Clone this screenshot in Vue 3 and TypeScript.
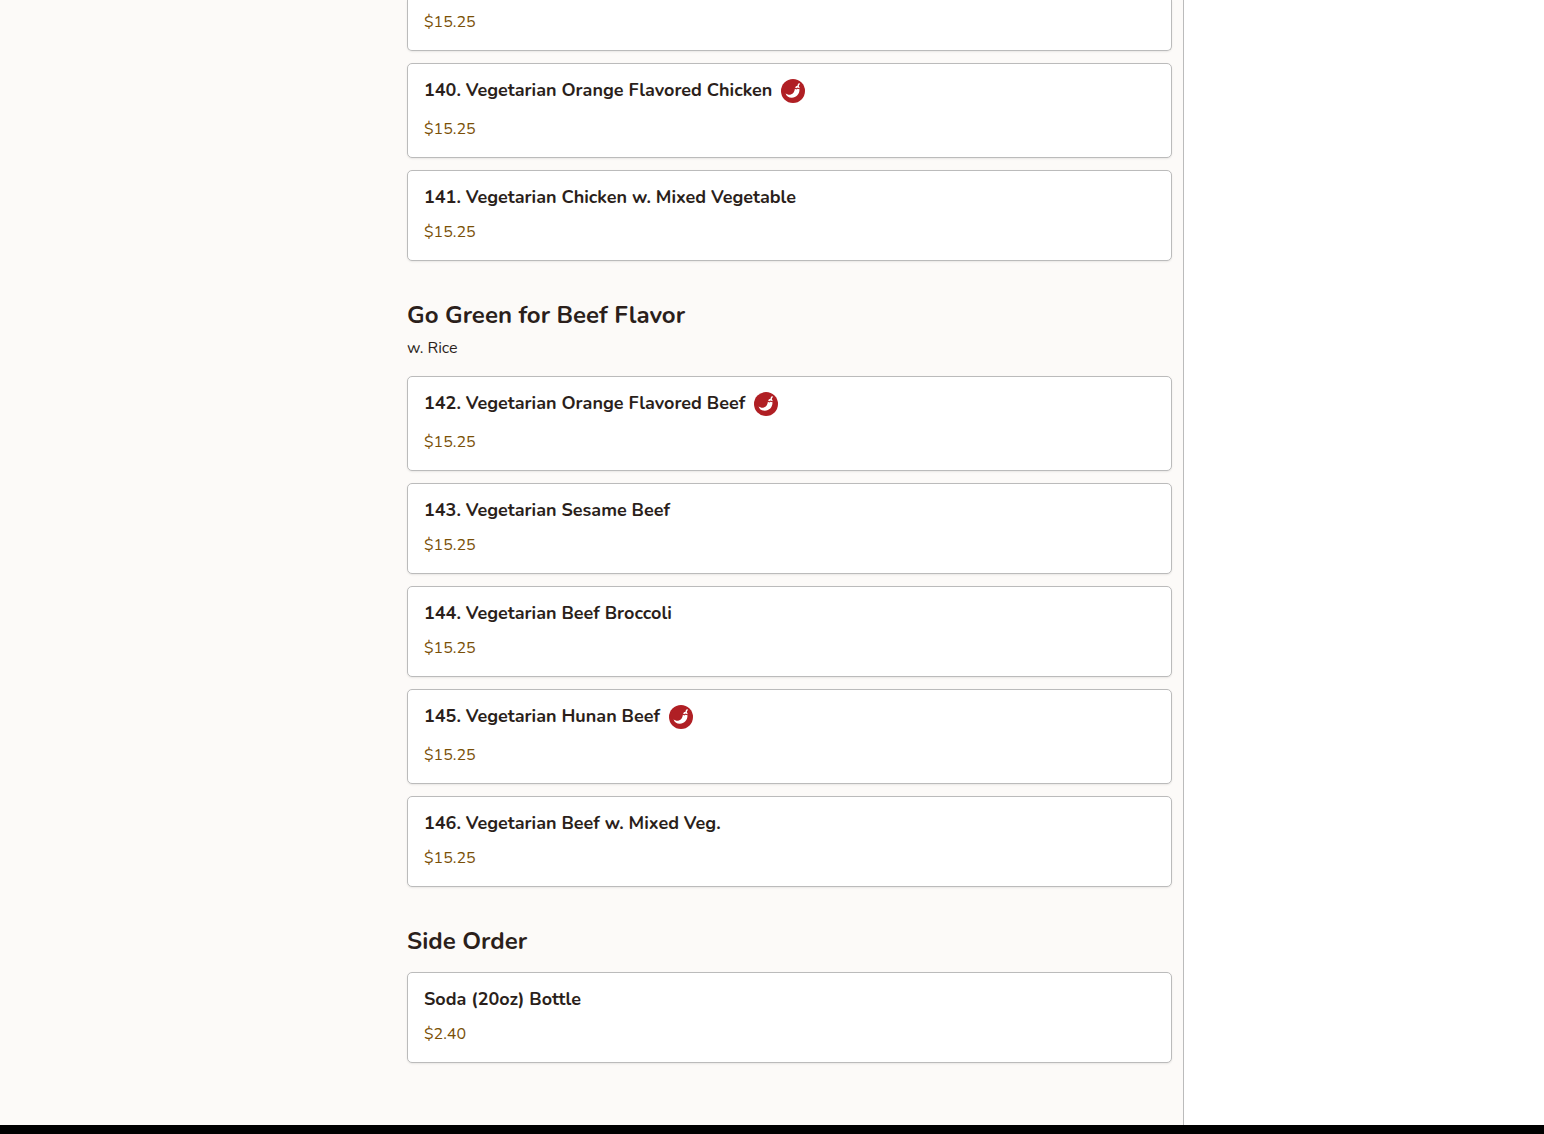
<script setup lang="ts">
interface MenuItem {
  id: string
  name: string
  price: string
  spicy?: boolean
}

interface MenuSection {
  id: string
  title?: string
  note?: string
  items: MenuItem[]
}

const sections: MenuSection[] = [
  {
    id: 'chicken',
    items: [
      { id: '139', name: '', price: '$15.25' },
      { id: '140', name: '140. Vegetarian Orange Flavored Chicken', price: '$15.25', spicy: true },
      { id: '141', name: '141. Vegetarian Chicken w. Mixed Vegetable', price: '$15.25' },
    ],
  },
  {
    id: 'beef',
    title: 'Go Green for Beef Flavor',
    note: 'w. Rice',
    items: [
      { id: '142', name: '142. Vegetarian Orange Flavored Beef', price: '$15.25', spicy: true },
      { id: '143', name: '143. Vegetarian Sesame Beef', price: '$15.25' },
      { id: '144', name: '144. Vegetarian Beef Broccoli', price: '$15.25' },
      { id: '145', name: '145. Vegetarian Hunan Beef', price: '$15.25', spicy: true },
      { id: '146', name: '146. Vegetarian Beef w. Mixed Veg.', price: '$15.25' },
    ],
  },
  {
    id: 'side',
    title: 'Side Order',
    items: [{ id: 'soda', name: 'Soda (20oz) Bottle', price: '$2.40' }],
  },
]
</script>

<template>
  <div class="page">
    <div class="layout">
      <main class="menu">
        <section v-for="section in sections" :key="section.id" class="section">
          <header v-if="section.title" class="section-head">
            <h2>{{ section.title }}</h2>
            <p v-if="section.note">{{ section.note }}</p>
          </header>
          <ul class="items">
            <li v-for="item in section.items" :key="item.id">
              <a class="card" :class="{ 'card-continued': !item.name }" :href="'#item-' + item.id">
                <div v-if="item.name" class="title-row">
                  <h3>{{ item.name }}</h3>
                  <svg v-if="item.spicy" class="spicy" viewBox="0 0 24 24" aria-label="Spicy" role="img">
                    <circle cx="12" cy="12" r="12" fill="#b01f24" />
                    <path
                      d="M4.600 14.200C6 15.500 8 16 9.800 15.500C12.300 14.800 13.500 12.600 13.900 9.700L15.400 10.600L16.600 9.700L18.500 10.300C18.600 15.200 15.300 18.700 10.800 18.700C7.600 18.700 5.200 17.100 4.600 14.200Z"
                      fill="#fff"
                    />
                    <path
                      d="M14.100 8.600C14.400 7.400 15.300 6.800 16.400 6.900C16.500 5.600 17.100 4.700 18.200 4.100L19 5C18.200 5.600 17.900 6.300 17.900 7.300C18.500 7.800 18.700 8.500 18.600 9.200L16.400 8.500L15.300 9.300Z"
                      fill="#fff"
                    />
                  </svg>
                </div>
                <span class="price">{{ item.price }}</span>
              </a>
            </li>
          </ul>
        </section>
      </main>
      <aside class="order" aria-label="Your order"></aside>
    </div>
    <footer class="footer"></footer>
  </div>
</template>

<style>
body {
  margin: 0;
}
</style>

<style scoped>
.page {
  display: flex;
  flex-direction: column;
  min-height: 100vh;
  background: #fcfaf8;
  color: #2b1f1b;
  font-family: Nunito, Lato, sans-serif;
  font-size: 16px;
  line-height: 24px;
}

.layout {
  display: grid;
  grid-template-columns: minmax(0, 1fr) 361px;
  flex: 1;
}

.menu {
  padding: 0 11px 62px 407px;
}

.order {
  border-left: 1px solid #bbb;
  background: #fff;
}

.footer {
  height: 9px;
  background: #000;
}

.section-head {
  padding: 38px 0 15px;
}

h2,
h3,
p,
ul {
  margin: 0;
  padding: 0;
}

h2 {
  font-size: 24px;
  line-height: 32px;
  font-weight: 700;
}

.section-head p {
  margin-top: 4px;
  line-height: 26px;
}

.items {
  display: flex;
  flex-direction: column;
  gap: 12px;
  list-style: none;
}

.card {
  display: flex;
  flex-direction: column;
  gap: 11px;
  padding: 14px 16px 16px;
  border: 1px solid #bbb;
  border-radius: 5px;
  background: #fff;
  box-shadow: 0 1px 2px rgba(0, 0, 0, 0.08);
  color: inherit;
  text-decoration: none;
}

.card-continued {
  padding-top: 10px;
  border-top: 0;
  border-radius: 0 0 5px 5px;
}

.title-row {
  display: flex;
  align-items: flex-start;
  gap: 9px;
}

h3 {
  font-size: 18px;
  line-height: 24px;
  font-weight: 700;
}

.spicy {
  width: 24px;
  height: 24px;
  margin: 1px 0 3px;
}

.price {
  color: #7a4f06;
}
</style>
